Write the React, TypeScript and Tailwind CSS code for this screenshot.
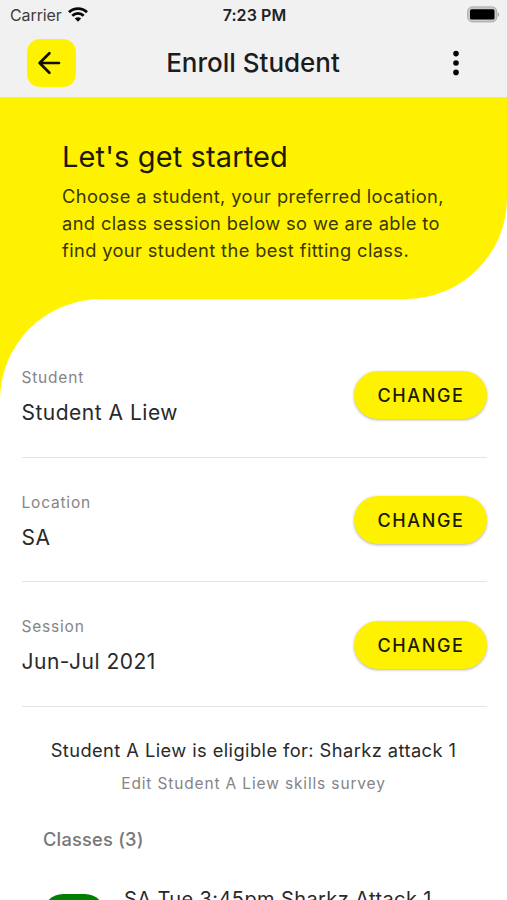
import React from 'react'

type Selection = {
  label: string
  value: string
}

const selections: Selection[] = [
  { label: 'Student', value: 'Student A Liew' },
  { label: 'Location', value: 'SA' },
  { label: 'Session', value: 'Jun-Jul 2021' },
]

function StatusBar() {
  return (
    <div className="grid h-[30px] grid-cols-3 items-center pl-[10px] pr-[8px] text-[#222]">
      <div className="-mt-[1px] flex items-center gap-[6px]">
        <span className="text-[16px] leading-5 tracking-[-0.1px] text-[#3c3c3c]">Carrier</span>
        <svg width="20" height="15" viewBox="0 0 20 15" fill="none" stroke="#080808" strokeWidth="2.8" aria-hidden>
          <path d="M1 5.2C6 .3 14 .3 19 5.2" />
          <path d="M4.3 8.7c3.2-3.1 8.2-3.1 11.4 0" />
          <path d="M10 14.7 6.8 11.5c1.8-1.7 4.6-1.7 6.4 0Z" fill="#080808" stroke="none" />
        </svg>
      </div>
      <div className="-mt-[1px] text-center text-[16px] font-semibold leading-5 tracking-[0.1px]">7:23 PM</div>
      <svg className="-mr-[1px] -mt-[2px] justify-self-end" width="33" height="17" viewBox="0 0 33 17" aria-hidden>
        <rect x="0.7" y="0.9" width="29" height="15" rx="4.5" fill="#c9c9c9" stroke="#a9a9a9" />
        <rect x="3" y="3.3" width="24.5" height="10.3" rx="1.5" fill="#000" />
        <path d="M30.7 6.2c2 .5 2 4 0 4.5Z" fill="#aaa" />
      </svg>
    </div>
  )
}

function Header() {
  return (
    <header className="grid h-[67px] grid-cols-[1fr_auto_1fr] items-center pb-[1px] pl-[27px] pr-[28px]">
      <button
        type="button"
        aria-label="Back"
        className="flex size-[48.5px] items-center justify-center rounded-[13px] bg-[#fff200] pr-[4px]"
      >
        <svg width="24" height="24" viewBox="0 0 24 24" fill="none" stroke="#111100" strokeWidth="2.7" strokeLinecap="round" strokeLinejoin="round" aria-hidden>
          <path d="M22 12H2.6M12.4 2.2 2.6 12l9.8 9.8" />
        </svg>
      </button>
      <h1 className="text-[26px] font-medium leading-8 text-[#1c1c1c]">Enroll Student</h1>
      <button type="button" aria-label="More options" className="mr-[11px] flex w-6 justify-center justify-self-end">
        <svg width="6" height="26" viewBox="0 0 6 26" fill="#050505" aria-hidden>
          <circle cx="3" cy="3.6" r="2.8" />
          <circle cx="3" cy="13" r="2.8" />
          <circle cx="3" cy="22.4" r="2.8" />
        </svg>
      </button>
    </header>
  )
}

function SelectionRow({ label, value }: Selection) {
  return (
    <div className="flex h-[124.7px] items-center justify-between border-b border-[#e4e4e4] pt-[1px]">
      <div className="pt-[4px]">
        <div className="text-[15.5px] leading-[26px] tracking-[0.8px] text-[#858585]">{label}</div>
        <div className="mt-[5px] text-[21px] leading-[34px] tracking-[0.5px] text-[#292929]">{value}</div>
      </div>
      <button
        type="button"
        className="h-[48px] w-[133px] rounded-full bg-[#fff200] pl-[1px] pt-[1px] text-[18px] font-medium tracking-[1.65px] text-[#1c1a00] shadow-[0_1px_3px_rgba(0,0,0,0.3)]"
      >
        CHANGE
      </button>
    </div>
  )
}

export default function App() {
  return (
    <div className="h-[900px] w-[507px] overflow-hidden bg-white font-['Inter','Liberation_Sans',sans-serif]">
      <div className="bg-[#f1f1f1]">
        <StatusBar />
        <Header />
      </div>

      <section className="h-[202px] rounded-br-[101px] bg-[#fff200] pl-[62px] pt-[42px]">
        <h2 className="text-[29px] leading-9 tracking-[0.13px] text-[#1c1a00]">Let's get started</h2>
        <p className="mt-[8px] whitespace-nowrap text-[18.3px] leading-[27px] tracking-[0.38px] text-[#3a3700]">
          Choose a student, your preferred location,
          <br />
          and class session below so we are able to
          <br />
          find your student the best fitting class.
        </p>
      </section>

      <div className="bg-[linear-gradient(#fff200_101px,white_101px)]">
        <main className="rounded-tl-[101px] bg-white pt-[34px]">
          <div className="pl-[21.5px] pr-[20px]">
            {selections.map((s) => (
              <SelectionRow key={s.label} {...s} />
            ))}
          </div>

          <div className="pt-[30px] text-center">
            <p className="text-[18.3px] leading-[26px] tracking-[0.42px] text-[#292929]">
              Student A Liew is eligible for: Sharkz attack 1
            </p>
            <p className="mt-[9px] text-[15.5px] leading-[24px] tracking-[0.85px] text-[#858585]">
              Edit Student A Liew skills survey
            </p>
          </div>

          <h3 className="mt-[30px] pl-[43px] text-[18.3px] font-medium leading-[26px] tracking-[0.2px] text-[#777]">
            Classes (3)
          </h3>

          <div className="mt-[42px] flex gap-[19px] pl-[43px]">
            <div className="size-[62px] rounded-[20px] bg-[#008000]" />
            <div className="-mt-[9px] text-[20px] leading-[28px] tracking-[0.4px] text-[#292929]">
              SA Tue 3:45pm Sharkz Attack 1
            </div>
          </div>
        </main>
      </div>
    </div>
  )
}
